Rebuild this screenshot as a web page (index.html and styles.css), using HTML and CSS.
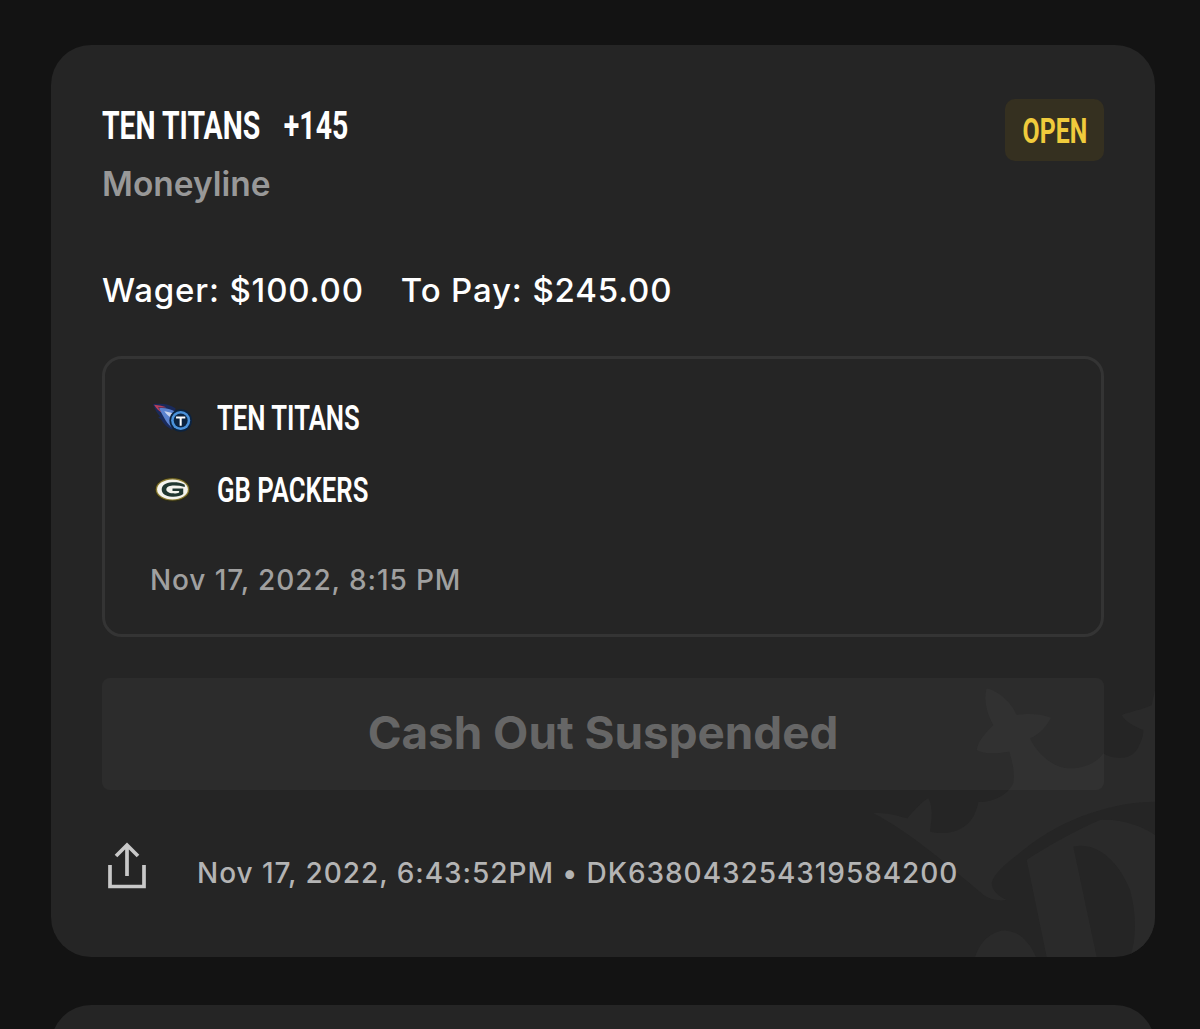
FILE: index.html
```html
<!DOCTYPE html>
<html lang="en">
<head>
<meta charset="utf-8">
<title>Bet slip</title>
<link rel="stylesheet" href="styles.css">
</head>
<body>
<main class="page">
  <article class="card">
    <svg class="watermark" viewBox="0 0 915 861" aria-hidden="true">
      <path class="wm-light" d="M70 430C110 425 150 440 172 445C190 425 215 395 235 385C250 410 245 450 240 485C280 495 340 490 370 440C380 420 385 400 385 395C420 400 470 380 490 340C495 300 485 270 478 245C440 250 405 255 380 240C385 210 410 185 430 165C410 130 400 90 410 55C450 65 485 100 500 135C530 130 570 130 603 143C590 170 565 195 540 205C560 250 610 295 660 295C700 295 740 280 760 250C790 270 840 270 860 240C875 215 880 195 880 180C855 170 825 155 815 135C840 125 875 120 905 105L915 60V395C800 395 640 440 520 540C470 580 430 610 425 640C425 660 445 680 470 690C440 695 410 685 395 670C300 590 170 480 70 430Z"/>
      <path class="wm-light" fill-rule="evenodd" d="M530 570C590 530 680 480 750 450C810 445 880 470 915 495V861H590ZM670 530C730 515 800 560 840 660C860 730 860 810 840 861H740Z"/>
      <path class="wm-light" d="M375 861C395 800 440 780 470 782C510 785 540 820 558 861Z"/>
    </svg>
    <header class="head">
      <div class="selection">
        <h1 class="pick"><span>TEN TITANS</span><span>+145</span></h1>
        <p class="market">Moneyline</p>
      </div>
      <span class="badge"><span class="badge-text">OPEN</span></span>
    </header>
    <p class="amounts"><span>Wager: $100.00</span><span>To Pay: $245.00</span></p>
    <section class="game">
      <div class="team">
        <svg class="logo" viewBox="0 0 40 24" aria-hidden="true">
          <path fill="#1a2a5a" d="M0 -3C8 -4 16 -3 22 1L19 22C14 20 10 16 8 12L5 10L7 9C4 6 2 2 0 -3Z"/>
          <path fill="#b8405a" d="M1 -2.500C6 -2 10 -1 13 0C10 .5 7 .5 5 0C6 2 8 4 10 6C6 4 3 1 1 -2.500Z"/>
          <path fill="#5b82cf" d="M6 1C11 0 17 2 21 4L19 20C14 17 11 11 6 1Z"/>
          <path fill="#c9d3ee" d="M11 4C13 4 16 5 19 6L18 10C15 9 13 7 11 4Z"/>
          <circle cx="27" cy="13" r="11" fill="#0c2340"/>
          <circle cx="27" cy="13" r="9.300" fill="#4b92db"/>
          <circle cx="27" cy="13" r="6.800" fill="#0c2340"/>
          <path fill="#fff" d="M22.500 9H31.500V11H28V18H26V11H22.500Z"/>
        </svg>
        <span class="team-name">TEN TITANS</span>
      </div>
      <div class="team">
        <svg class="logo" viewBox="0 0 40 24" aria-hidden="true">
          <g transform="translate(0 -2)">
            <ellipse cx="19" cy="12" rx="17.500" ry="12" fill="#2a2a18"/>
            <ellipse cx="19" cy="12" rx="16.300" ry="10.900" fill="#8a7a30"/>
            <ellipse cx="19" cy="12" rx="15" ry="9.800" fill="#f4f4ee"/>
            <path fill="#203731" d="M31 7.500C27 5 22 4.800 18.500 5C12 5.500 8.500 8 8.500 12C8.500 16 12 18.500 18.500 19C23 19.200 27 18.500 29.500 16.500V11H19V13.500H25.500V15C23.500 16 21 16 19 15.800C15.500 15.400 13 14 13 12C13 10 15.500 8.400 19 8.200C23 8 27 8.500 31 9.500Z"/>
          </g>
        </svg>
        <span class="team-name">GB PACKERS</span>
      </div>
      <p class="kickoff">Nov 17, 2022, 8:15 PM</p>
    </section>
    <button class="cashout" type="button" disabled>Cash Out Suspended</button>
    <footer class="foot">
      <svg class="share" viewBox="0 0 40 48" aria-hidden="true">
        <path d="M3 23V44.500H37V23M20 34V3M9 14L20 3L31 14"/>
      </svg>
      <span class="stamp">Nov 17, 2022, 6:43:52PM • DK638043254319584200</span>
    </footer>
  </article>
  <div class="next-clip"></div>
</main>
</body>
</html>
```
FILE: styles.css
```css
* { box-sizing: border-box; }
html, body { margin: 0; height: 100%; overflow: hidden; background: #131313; }
body { font-family: Inter, "Liberation Sans", sans-serif; color: #fff; }
.page { display: flex; flex-direction: column; gap: 48px; padding: 45px 45px 0 51px; }
.card { position: relative; flex: none; height: 912px; padding: 54px 51px 0; border-radius: 40px; background: #252525; overflow: hidden; }
.card > *:not(.watermark) { position: relative; }
.watermark { position: absolute; right: 0; bottom: 0; width: 305px; height: 287px; }
.wm-light { fill: #2a2a2a; }
.next-clip { flex: none; height: 24px; overflow: hidden; }
.next-clip::before { content: ""; display: block; height: 120px; border-radius: 40px; background: #252525; }
.head { display: flex; justify-content: space-between; align-items: flex-start; }
.pick { display: flex; gap: 32px; margin: 1px 0 0; height: 52px; font: 700 38.5px/52px Roboto, sans-serif; transform: scaleX(.738); transform-origin: left center; white-space: nowrap; }
.market { margin: 12px 0 0; font-size: 33.500px; line-height: 40px; font-weight: 600; color: #989898; }
.badge { display: flex; justify-content: center; width: 99px; height: 62px; border-radius: 10px; background: #353020; color: #f0cb3c; font: 700 34.500px/64px Roboto, sans-serif; }
.badge-text { display: block; transform: scaleX(.72); }
.amounts { display: flex; gap: 37px; margin: 64px 0 0; font-size: 33px; line-height: 44px; font-weight: 500; letter-spacing: .85px; }
.game { height: 281px; margin-top: 44px; padding: 36px 45px 0 48px; border: 3px solid #343434; border-radius: 20px; }
.team { display: flex; align-items: center; gap: 23px; height: 48px; margin-bottom: 24px; font: 600 35px/48px Roboto, sans-serif; }
.team-name { display: block; transform: scaleX(.735); transform-origin: left center; white-space: nowrap; }
.logo { width: 41px; height: 25px; flex: none; overflow: visible; }
.kickoff { margin: 47px 0 0 -3px; font-size: 28px; line-height: 36px; font-weight: 500; letter-spacing: .9px; color: #a0a0a0; }
.cashout { display: block; width: 100%; height: 112px; margin-top: 41px; padding: 0 0 3px; border: 0; border-radius: 8px; background: rgba(255,255,255,.035); color: #666; font-family: inherit; font-size: 45.800px; font-weight: 700; }
.foot { display: flex; align-items: flex-start; gap: 50px; margin-top: 52px; padding-left: 5px; font-size: 28px; line-height: 48px; font-weight: 500; letter-spacing: .95px; color: #b4b4b4; }
.stamp { margin-top: 7px; white-space: nowrap; }
.share { width: 40px; height: 48px; flex: none; }
.share path { fill: none; stroke: #c8c8c8; stroke-width: 3.7; }
```
